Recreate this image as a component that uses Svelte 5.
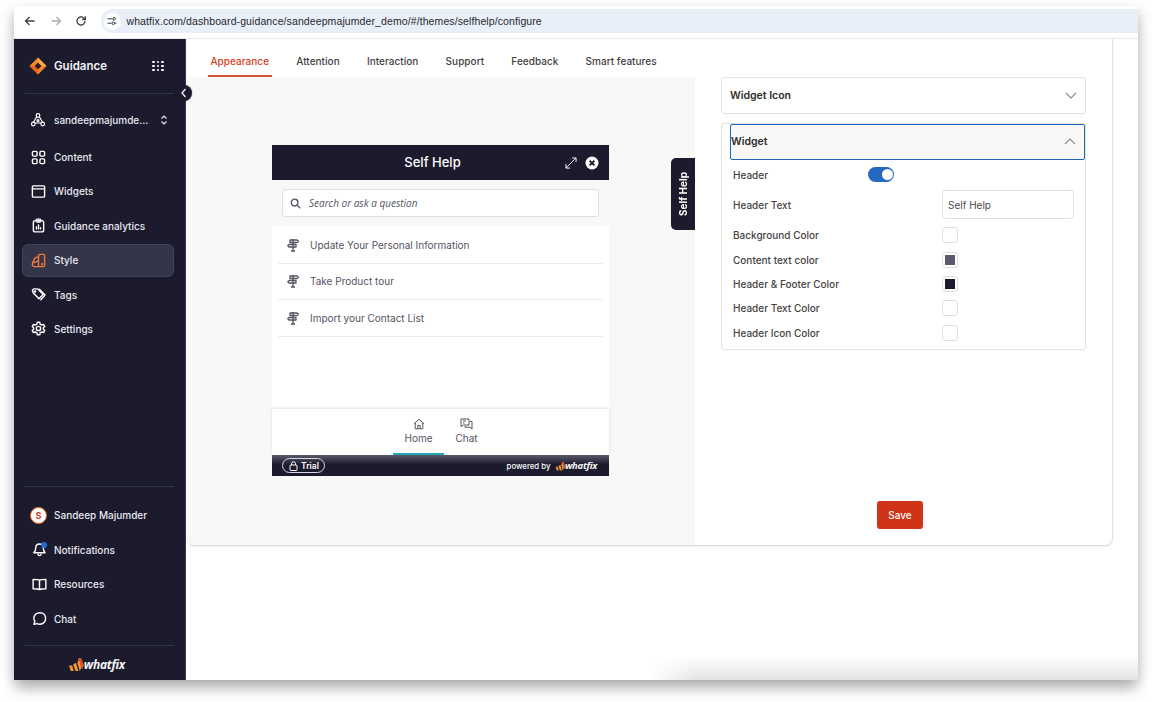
<script>
  const tabs = ['Appearance', 'Attention', 'Interaction', 'Support', 'Feedback', 'Smart features'];

  const topNav = [
    { label: 'Content', icon: 'content' },
    { label: 'Widgets', icon: 'widgets' },
    { label: 'Guidance analytics', icon: 'analytics' },
    { label: 'Style', icon: 'style', active: true },
    { label: 'Tags', icon: 'tags' },
    { label: 'Settings', icon: 'settings' }
  ];

  const bottomNav = [
    { label: 'Notifications', icon: 'bell' },
    { label: 'Resources', icon: 'book' },
    { label: 'Chat', icon: 'chat' }
  ];

  const guides = ['Update Your Personal Information', 'Take Product tour', 'Import your Contact List'];

  const colors = [
    { label: 'Background Color', value: '#ffffff' },
    { label: 'Content text color', value: '#5b5870' },
    { label: 'Header & Footer Color', value: '#1c1b2e' },
    { label: 'Header Text Color', value: '#ffffff' },
    { label: 'Header Icon Color', value: '#ffffff' }
  ];
</script>

{#snippet logoMark(size)}
  <svg class="mark" width={size * 1.25} height={size} viewBox="0 0 20 16">
    <path d="M1 9l2 6h3L4.500 9zM5.500 8l2.500 7h3L8.500 6zM10 6.500l2.500 8.500 1.800-4L12 1z" fill="#f4972f" />
    <path d="M13.500 9.500L11 1h3l3 8-2 4z" fill="#e0531f" />
  </svg>
{/snippet}

{#snippet signpost()}
  <svg width="12" height="14" viewBox="0 0 12 14" fill="none" stroke="#55535f" stroke-width="1.300" stroke-linejoin="round">
    <path d="M6 1v12M4 13h4" />
    <path d="M3 2h7l1.500 1.300L10 4.500H3z" />
    <path d="M9 6.500H2L.8 7.800 2 9h7z" />
  </svg>
{/snippet}

{#snippet navIcon(name)}
  <svg class="nav-icon" width="15" height="15" viewBox="0 0 16 16" fill="none" stroke="#fff" stroke-width="1.500" stroke-linecap="round" stroke-linejoin="round">
    {#if name === 'content'}
      <rect x="1.500" y="1.500" width="5" height="5" rx="1.200" />
      <rect x="9.500" y="1.500" width="5" height="5" rx="1.200" />
      <rect x="1.500" y="9.500" width="5" height="5" rx="1.200" />
      <rect x="9.500" y="9.500" width="5" height="5" rx="1.200" />
    {:else if name === 'widgets'}
      <rect x="1.500" y="2" width="13" height="12" rx="1" />
      <path d="M1.500 5.200h13" />
    {:else if name === 'analytics'}
      <rect x="2.500" y="2.800" width="11" height="12" rx="2" />
      <rect x="5.500" y="1.200" width="5" height="3" rx="1" />
      <path d="M5.800 11.800V9.500M8 11.800V7.500M10.200 11.800v-1.500" />
    {:else if name === 'style'}
      <g stroke="#ee7a3a">
        <rect x="8" y="1.500" width="6.500" height="13" rx="1.200" />
        <path d="M8 4L3.800 5.500 1.500 11.500c-.4 1.500.5 3 2.500 3h4" />
        <path d="M1.700 10.500L8 8.500" />
        <circle cx="11.800" cy="12" r=".5" />
      </g>
    {:else if name === 'tags'}
      <path d="M1.500 3.500l1.500-1.500h4l6 6-4.500 4.500-6-6z" />
      <path d="M9 2.500l6 6-4.500 5" />
      <circle cx="4.300" cy="4.700" r=".6" />
    {:else if name === 'settings'}
      <path d="M6.700 1.300h2.600l.4 2 1.800 1 1.900-.7 1.300 2.300-1.500 1.300v1.600l1.500 1.300-1.300 2.300-1.900-.7-1.800 1-.4 2H6.700l-.4-2-1.800-1-1.900.7-1.300-2.300 1.500-1.300V7.200L1.300 5.900l1.300-2.300 1.900.7 1.800-1z" />
      <circle cx="8" cy="8" r="2.300" />
    {:else if name === 'bell'}
      <path d="M8 2.200c-2.500 0-4 1.800-4 4.200 0 2.800-1 4-2 5h12c-1-1-2-2.200-2-5 0-2.400-1.500-4.200-4-4.200z" />
      <path d="M6.300 13c.2 1 .9 1.500 1.700 1.500s1.500-.5 1.700-1.500" />
    {:else if name === 'book'}
      <path d="M8 3.500C6.800 2.700 5 2.500 1.200 2.500v10c3.800 0 5.600.2 6.800 1 1.200-.8 3-1 6.800-1v-10c-3.800 0-5.600.2-6.800 1zM8 3.500v10" />
    {:else if name === 'chat'}
      <path d="M8.500 1.800c-3.700 0-6.500 2.700-6.500 6 0 1.300.4 2.400 1.100 3.400L2 14.200l3.400-.8c1 .5 2 .7 3.100.7 3.500 0 6-2.800 6-6.200s-2.500-6.100-6-6.100z" />
    {/if}
  </svg>
{/snippet}

<div class="page">
<div class="window">
  <header class="toolbar">
    <svg width="12" height="12" viewBox="0 0 12 12" fill="none" stroke="#3c4043" stroke-width="1.300"><path d="M10.500 6H1.500M5.500 2L1.500 6l4 4" /></svg>
    <svg width="12" height="12" viewBox="0 0 12 12" fill="none" stroke="#a9acb0" stroke-width="1.300"><path d="M1.500 6h9M6.500 2l4 4-4 4" /></svg>
    <svg width="12" height="12" viewBox="0 0 12 12" fill="none" stroke="#3c4043" stroke-width="1.300"><path d="M10 6a4 4 0 1 1-1.200-2.900L10 4.300" /><path d="M10.300 1.300v3.200H7.100" /></svg>
    <div class="omnibox">
      <span class="site-chip">
        <svg width="10" height="10" viewBox="0 0 10 10" fill="none" stroke="#3c4043" stroke-width="1">
          <path d="M.5 2.800h4.500M8 7.200h1.500M.5 7.200h4" /><circle cx="7" cy="2.800" r="1.300" /><circle cx="6.300" cy="7.200" r="1.300" />
        </svg>
      </span>
      <span class="url">whatfix.com/dashboard-guidance/sandeepmajumder_demo/#/themes/selfhelp/configure</span>
    </div>
  </header>

  <div class="app-body">
    <aside class="sidebar">
      <div class="brand">
        <svg width="18" height="18" viewBox="0 0 18 18">
          <path d="M9 .5L17.500 9 9 17.500.5 9z" fill="#f58a25" />
          <path d="M9 .5L17.500 9 9 9z" fill="#f9a947" />
          <path d="M9 5.500L12.500 9 9 12.500 5.500 9z" fill="#2a1c1c" />
          <path d="M.5 9L9 17.500 9 12.500 5.500 9z" fill="#e8641b" />
        </svg>
        <span class="brand-name">Guidance</span>
        <span class="apps">
          {#each Array(9) as _}<i></i>{/each}
        </span>
      </div>
      <div class="account">
        <svg class="nav-icon" width="16" height="16" viewBox="0 0 16 16" fill="none" stroke="#fff" stroke-width="1.200" stroke-linejoin="round">
          <path d="M8 2.500l5 8.500H3z" />
          <circle cx="8" cy="3.500" r="1.800" fill="#1c1b2e" />
          <circle cx="3.300" cy="12" r="1.800" fill="#1c1b2e" />
          <circle cx="12.700" cy="12" r="1.800" fill="#1c1b2e" />
          <circle cx="8" cy="8.600" r="1" fill="#1c1b2e" />
        </svg>
        <span class="account-name">sandeepmajumde...</span>
        <svg class="updown" width="8" height="12" viewBox="0 0 8 12" fill="none" stroke="#e8e8ee" stroke-width="1.200"><path d="M1.500 4.500L4 2l2.500 2.500M1.500 7.500L4 10l2.500-2.500" /></svg>
      </div>
      <nav class="nav">
        {#each topNav as item}
          <div class="nav-item" class:active={item.active}>
            {@render navIcon(item.icon)}
            <span>{item.label}</span>
          </div>
        {/each}
      </nav>
      <div class="sidebar-foot">
        <div class="nav-item">
          <span class="avatar">S</span>
          <span>Sandeep Majumder</span>
        </div>
        {#each bottomNav as item}
          <div class="nav-item">
            <span class="icon-wrap">
              {@render navIcon(item.icon)}
              {#if item.icon === 'bell'}<i class="dot"></i>{/if}
            </span>
            <span>{item.label}</span>
          </div>
        {/each}
      </div>
      <div class="sidebar-logo">
        {@render logoMark(15)}
        <span class="wordmark">whatfix</span>
      </div>
      <button class="collapse" aria-label="Collapse">
        <svg width="8" height="10" viewBox="0 0 8 10" fill="none" stroke="#fff" stroke-width="1.200"><path d="M5.500 1L2 5l3.500 4" /></svg>
      </button>
    </aside>

    <main class="main">
      <section class="card">
        <div class="tabs">
          {#each tabs as tab, i}
            <span class="tab" class:current={i === 0}>{tab}</span>
          {/each}
        </div>
        <div class="panes">
          <div class="preview">
            <div class="widget">
              <div class="widget-head">
                <span>Self Help</span>
                <svg class="expand" width="12" height="12" viewBox="0 0 13 13" fill="none" stroke="#fff" stroke-width="1">
                  <path d="M1 12L12 1M7.500 1H12v4.500M1 7.500V12h4.500" />
                </svg>
                <svg class="close" width="14" height="14" viewBox="0 0 14 14">
                  <circle cx="7" cy="7" r="6.500" fill="#fff" />
                  <path d="M4.600 4.600l4.800 4.800M9.400 4.600l-4.800 4.800" stroke="#1c1b2e" stroke-width="1.900" />
                </svg>
              </div>
              <div class="search">
                <svg width="11" height="11" viewBox="0 0 11 11" fill="none" stroke="#55535f" stroke-width="1.300"><circle cx="4.600" cy="4.600" r="3.400" /><path d="M7.200 7.200l3 3" /></svg>
                <span>Search or ask a question</span>
              </div>
              <ul class="guides">
                {#each guides as guide}
                  <li>
                    {@render signpost()}
                    <span>{guide}</span>
                  </li>
                {/each}
              </ul>
              <div class="widget-tabs">
                <div class="widget-tab on">
                  <svg width="12" height="12" viewBox="0 0 12 12" fill="none" stroke="#55535f" stroke-width="1"><path d="M1 5.800L6 1.200l5 4.600M2.200 4.800v6h7.600v-6M4.800 10.800V7.500h2.400v3.300" /></svg>
                  <span>Home</span>
                </div>
                <div class="widget-tab">
                  <svg width="13" height="12" viewBox="0 0 13 12" fill="none" stroke="#55535f" stroke-width="1"><path d="M1 1h8v6H3.500L1 8.500zM3 3h3M3 5h1.500" /><path d="M10 3.500h2v7.500l-2-1.800H5V8" /></svg>
                  <span>Chat</span>
                </div>
              </div>
              <div class="widget-foot">
                <span class="trial">
                  <svg width="9" height="10" viewBox="0 0 9 10" fill="none" stroke="#fff" stroke-width="1"><rect x="1" y="4" width="7" height="5.500" rx="1" /><path d="M2.500 4V2.800a2 2 0 0 1 4 0V4" /></svg>
                  Trial
                </span>
                <span class="powered">powered by</span>
                {@render logoMark(10)}
                <span class="wordmark small">whatfix</span>
              </div>
            </div>
            <div class="side-tab"><span>Self Help</span></div>
          </div>

          <div class="settings">
            <div class="accordion">
              <div class="acc-head">
                <span>Widget Icon</span>
                <svg width="12" height="7" viewBox="0 0 12 7" fill="none" stroke="#8b8b8b" stroke-width="1.100"><path d="M1 1l5 5 5-5" /></svg>
              </div>
            </div>
            <div class="accordion open">
              <div class="acc-head focus">
                <span>Widget</span>
                <svg width="12" height="7" viewBox="0 0 12 7" fill="none" stroke="#8b8b8b" stroke-width="1.100"><path d="M1 6l5-5 5 5" /></svg>
              </div>
              <div class="acc-body">
                <div class="row toggle-row">
                  <span class="row-label">Header</span>
                  <span class="toggle"><i></i></span>
                </div>
                <div class="row text-row">
                  <span class="row-label">Header Text</span>
                  <span class="text-input">Self Help</span>
                </div>
                {#each colors as c}
                  <div class="row color-row">
                    <span class="row-label">{c.label}</span>
                    <span class="swatch"><i style="background: {c.value}"></i></span>
                  </div>
                {/each}
              </div>
            </div>
            <div class="actions">
              <button class="save">Save</button>
            </div>
          </div>
        </div>
      </section>
    </main>
  </div>
  <div class="bottom-fade"></div>
</div>
</div>

<style>
  :global(body) {
    margin: 0;
    background: #fff;
    font-family: Inter, "Liberation Sans", sans-serif;
  }
  .page {
    box-sizing: border-box;
    height: 702px;
    padding: 6px 14px 22px;
    overflow: hidden;
  }
  .window {
    position: relative;
    overflow: hidden;
    box-sizing: border-box;
    width: 1124px;
    height: 674px;
    background: #fff;
    box-shadow: 0 9px 14px -1px rgba(0, 0, 0, 0.28), 0 3px 12px rgba(0, 0, 0, 0.1);
  }
  .bottom-fade {
    position: absolute;
    right: 0;
    bottom: 0;
    width: 490px;
    height: 24px;
    background: linear-gradient(transparent, rgba(0, 0, 0, 0.11));
    -webkit-mask-image: linear-gradient(90deg, transparent, #000 50px);
    mask-image: linear-gradient(90deg, transparent, #000 50px);
    pointer-events: none;
  }
  .toolbar {
    display: flex;
    align-items: center;
    gap: 13.500px;
    box-sizing: border-box;
    height: 33px;
    padding: 3px 0 5px 10px;
    border-bottom: 1px solid #e6e7ea;
  }
  .omnibox {
    display: flex;
    align-items: center;
    gap: 6px;
    flex: 1;
    height: 24px;
    padding-left: 3px;
    border-radius: 12px 0 0 12px;
    background: #e9eff8;
  }
  .site-chip {
    display: flex;
    align-items: center;
    justify-content: center;
    width: 17px;
    height: 17px;
    border-radius: 50%;
    background: #fff;
  }
  .url {
    font-family: "Liberation Sans", sans-serif;
    font-size: 10.500px;
    letter-spacing: 0.1px;
    color: #26282b;
  }
  .app-body {
    display: flex;
    height: 641px;
  }
  .sidebar {
    position: relative;
    display: flex;
    flex-direction: column;
    flex: none;
    box-sizing: border-box;
    width: 172px;
    padding: 0 8px;
    background: #1c1b2e;
    border-right: 1px solid #3a3a4e;
    color: #e8e8ee;
    font-size: 10px;
    font-weight: 500;
  }
  .brand {
    display: flex;
    align-items: center;
    height: 54px;
    margin: 0 3px;
    padding: 0 10px 0 4px;
    border-bottom: 1px solid #33334a;
  }
  .brand-name {
    margin-left: 7px;
    font-size: 11.500px;
    font-weight: 600;
    color: #f3f3f6;
  }
  .apps {
    display: grid;
    grid-template-columns: repeat(3, 3px);
    gap: 1.500px;
    margin-left: auto;
  }
  .apps i {
    width: 2.500px;
    height: 2.500px;
    border-radius: 50%;
    background: #fff;
  }
  .account {
    display: flex;
    align-items: center;
    gap: 8px;
    height: 34px;
    margin-top: 9px;
    padding: 0 9px 0 8px;
  }
  .account-name {
    flex: 1;
    white-space: nowrap;
  }
  .updown {
    flex: none;
  }
  .nav {
    display: flex;
    flex-direction: column;
    gap: 1.400px;
    margin: 3.500px 3px 0 0;
  }
  .nav-item {
    display: flex;
    align-items: center;
    gap: 8px;
    box-sizing: border-box;
    height: 33px;
    padding: 0 8px;
    border: 1px solid transparent;
    border-radius: 6px;
    white-space: nowrap;
  }
  .nav-item.active {
    background: #35354a;
    border-color: #41415a;
  }
  .nav-icon {
    flex: none;
  }
  .sidebar-foot {
    display: flex;
    flex-direction: column;
    gap: 1.400px;
    margin: auto 3px 0;
    padding-top: 12px;
    border-top: 1px solid #33334a;
  }
  .sidebar-foot .nav-item {
    gap: 7px;
    padding: 0 4px;
  }
  .avatar {
    display: flex;
    flex: none;
    align-items: center;
    justify-content: center;
    box-sizing: border-box;
    width: 17px;
    height: 17px;
    border-radius: 50%;
    background: #fff;
    border: 1.500px solid #e8641b;
    color: #d4401c;
    font-size: 9px;
    font-weight: 700;
  }
  .icon-wrap {
    position: relative;
    display: flex;
    padding-left: 2px;
  }
  .dot {
    position: absolute;
    top: 0;
    right: 0;
    width: 6px;
    height: 6px;
    border-radius: 50%;
    background: #1f6ed8;
  }
  .sidebar-logo {
    display: flex;
    align-items: center;
    justify-content: center;
    box-sizing: border-box;
    height: 35px;
    margin: 10px 3px 0;
    padding: 3px 6px 0 0;
    border-top: 1px solid #33334a;
  }
  .mark {
    flex: none;
    margin-right: -3px;
  }
  .wordmark {
    font-family: "Open Sans", sans-serif;
    font-size: 12px;
    font-style: italic;
    font-weight: 700;
    color: #f4f4f6;
    letter-spacing: -0.3px;
  }
  .wordmark.small {
    font-size: 9.500px;
  }
  .collapse {
    position: absolute;
    top: 46px;
    right: -7px;
    display: flex;
    align-items: center;
    justify-content: center;
    z-index: 2;
    width: 16px;
    height: 16px;
    padding: 0;
    border: 0;
    border-radius: 50%;
    background: #1c1b2e;
    box-shadow: 0 0 2px rgba(0, 0, 0, 0.4);
  }
  .main {
    flex: 1;
    min-width: 0;
    background: #fff;
  }
  .card {
    display: flex;
    flex-direction: column;
    box-sizing: border-box;
    width: 926px;
    height: 507px;
    margin-left: 1px;
    border-radius: 0 0 8px 8px;
    border-right: 1px solid #e2e2e0;
    border-bottom: 1.500px solid #dcdcdc;
    box-shadow: 0 1px 2px rgba(0, 0, 0, 0.08);
    background: #fff;
  }
  .tabs {
    display: flex;
    gap: 22.200px;
    flex: none;
    height: 38px;
    padding-left: 21px;
  }
  .tab {
    display: flex;
    align-items: center;
    box-sizing: border-box;
    height: 38px;
    padding: 10px 2.500px 2px;
    font-size: 10px;
    font-weight: 500;
    letter-spacing: 0.03px;
    color: #3f3f3f;
    border-bottom: 2px solid transparent;
  }
  .tab.current {
    color: #d4401c;
    border-bottom-color: #d4503a;
  }
  .panes {
    display: flex;
    flex: 1;
    min-height: 0;
  }
  .preview {
    position: relative;
    flex: none;
    box-sizing: border-box;
    width: 508px;
    padding: 68px 0 0 85px;
    background: #f9f8f6;
    border-radius: 0 0 0 8px;
  }
  .widget {
    display: flex;
    flex-direction: column;
    width: 337px;
    height: 331px;
  }
  .widget-head {
    position: relative;
    display: flex;
    align-items: center;
    justify-content: center;
    flex: none;
    box-sizing: border-box;
    height: 35px;
    padding: 0 16px 2px 0;
    background: #1c1b2e;
    color: #fff;
    font-size: 13px;
    font-weight: 500;
  }
  .expand {
    position: absolute;
    right: 32px;
    top: 12px;
  }
  .close {
    position: absolute;
    right: 10px;
    top: 11px;
  }
  .search {
    display: flex;
    align-items: center;
    gap: 8px;
    box-sizing: border-box;
    flex: none;
    height: 28px;
    margin: 9px 10px;
    padding: 0 7px;
    background: #fff;
    border: 1px solid #dedee2;
    border-radius: 3px;
  }
  .search span {
    font-family: "Open Sans", sans-serif;
    font-size: 10px;
    font-style: italic;
    color: #55535f;
  }
  .guides {
    flex: 1;
    margin: 0;
    padding: 1px 6px 0;
    list-style: none;
    background: #fff;
  }
  .guides li {
    display: flex;
    align-items: center;
    gap: 11px;
    box-sizing: border-box;
    height: 36.500px;
    padding: 0 8px 0 9px;
    border-bottom: 1px solid #e9e9ee;
    font-size: 10px;
    color: #55535f;
  }
  .widget-tabs {
    display: flex;
    justify-content: center;
    flex: none;
    height: 46px;
    background: #fff;
    box-shadow: 0 -1px 3px rgba(60, 60, 90, 0.14);
  }
  .widget-tab {
    display: flex;
    flex-direction: column;
    align-items: center;
    justify-content: center;
    gap: 2px;
    box-sizing: border-box;
    width: 45px;
    padding-bottom: 1px;
    font-size: 10px;
    color: #55535f;
    border-bottom: 2px solid transparent;
  }
  .widget-tab.on {
    width: 51px;
    border-bottom-color: #1fa7bd;
  }
  .widget-tab:first-child {
    margin-left: 1px;
  }
  .widget-foot {
    display: flex;
    align-items: center;
    flex: none;
    height: 21px;
    padding: 0 12px 0 10px;
    background: linear-gradient(#5a5a68, #1c1b2e 45%);
    color: #fff;
  }
  .trial {
    display: flex;
    align-items: center;
    gap: 3px;
    box-sizing: border-box;
    height: 15px;
    padding: 0 5px 0 6px;
    border: 1px solid #d8d8de;
    border-radius: 8px;
    font-size: 8.500px;
    font-weight: 600;
  }
  .powered {
    margin: 0 5px 0 auto;
    font-size: 7.800px;
    font-weight: 500;
  }
  .side-tab {
    position: absolute;
    top: 81px;
    right: 0;
    display: flex;
    align-items: center;
    justify-content: center;
    width: 24px;
    height: 72px;
    background: #1c1b2e;
    border-radius: 5px 0 0 5px;
    color: #fff;
  }
  .side-tab span {
    writing-mode: vertical-rl;
    transform: rotate(180deg);
    font-size: 10px;
    font-weight: 700;
    white-space: nowrap;
  }
  .settings {
    display: flex;
    flex-direction: column;
    flex: 1;
    padding: 0 26px;
  }
  .accordion {
    box-sizing: border-box;
    width: 365px;
    margin-bottom: 8.500px;
    border: 1px solid #e2e2df;
    border-radius: 3px;
  }
  .acc-head {
    display: flex;
    align-items: center;
    justify-content: space-between;
    box-sizing: border-box;
    height: 35px;
    padding: 0 8px;
    font-size: 10.500px;
    font-weight: 600;
    color: #2c2c2c;
  }
  .acc-head.focus {
    height: 36px;
    margin: 0 0 0 8px;
    padding-left: 0;
    background: #f9f8f6;
    border: 1px solid #1f66c1;
    border-radius: 2px;
  }
  .acc-body {
    padding: 0.500px 11px 4px;
  }
  .row {
    display: flex;
    align-items: center;
    font-size: 10px;
    font-weight: 500;
    color: #44433f;
  }
  .row-label {
    white-space: nowrap;
  }
  .toggle-row {
    height: 29px;
  }
  .toggle-row .row-label {
    width: 135px;
  }
  .toggle {
    position: relative;
    display: block;
    width: 26px;
    height: 15px;
    border-radius: 8px;
    background: #2468c0;
  }
  .toggle i {
    position: absolute;
    top: 2px;
    right: 1px;
    width: 11px;
    height: 11px;
    border-radius: 50%;
    background: #fff;
  }
  .text-row {
    justify-content: space-between;
    height: 31px;
  }
  .text-input {
    display: flex;
    align-items: center;
    box-sizing: border-box;
    width: 132px;
    height: 29px;
    padding-left: 5px;
    border: 1px solid #e0e0dc;
    border-radius: 3px;
    color: #4a4a47;
    font-weight: 400;
  }
  .color-row {
    height: 24.400px;
  }
  .text-row + .color-row {
    margin-top: 3px;
  }
  .swatch {
    display: flex;
    align-items: center;
    justify-content: center;
    box-sizing: border-box;
    width: 16px;
    height: 16px;
    margin-left: auto;
    margin-right: 116px;
    border: 1px solid #dfdfdb;
    border-radius: 3px;
    background: #fff;
  }
  .swatch i {
    width: 10px;
    height: 10px;
  }
  .actions {
    display: flex;
    justify-content: center;
    width: 365px;
    margin-top: 142.500px;
  }
  .save {
    box-sizing: border-box;
    width: 46px;
    height: 28px;
    margin-left: -8px;
    padding: 0 0 0 1px;
    border: 0;
    border-radius: 3px;
    background: #cf3418;
    color: #fff;
    font: 500 10px Inter, sans-serif;
  }
</style>
